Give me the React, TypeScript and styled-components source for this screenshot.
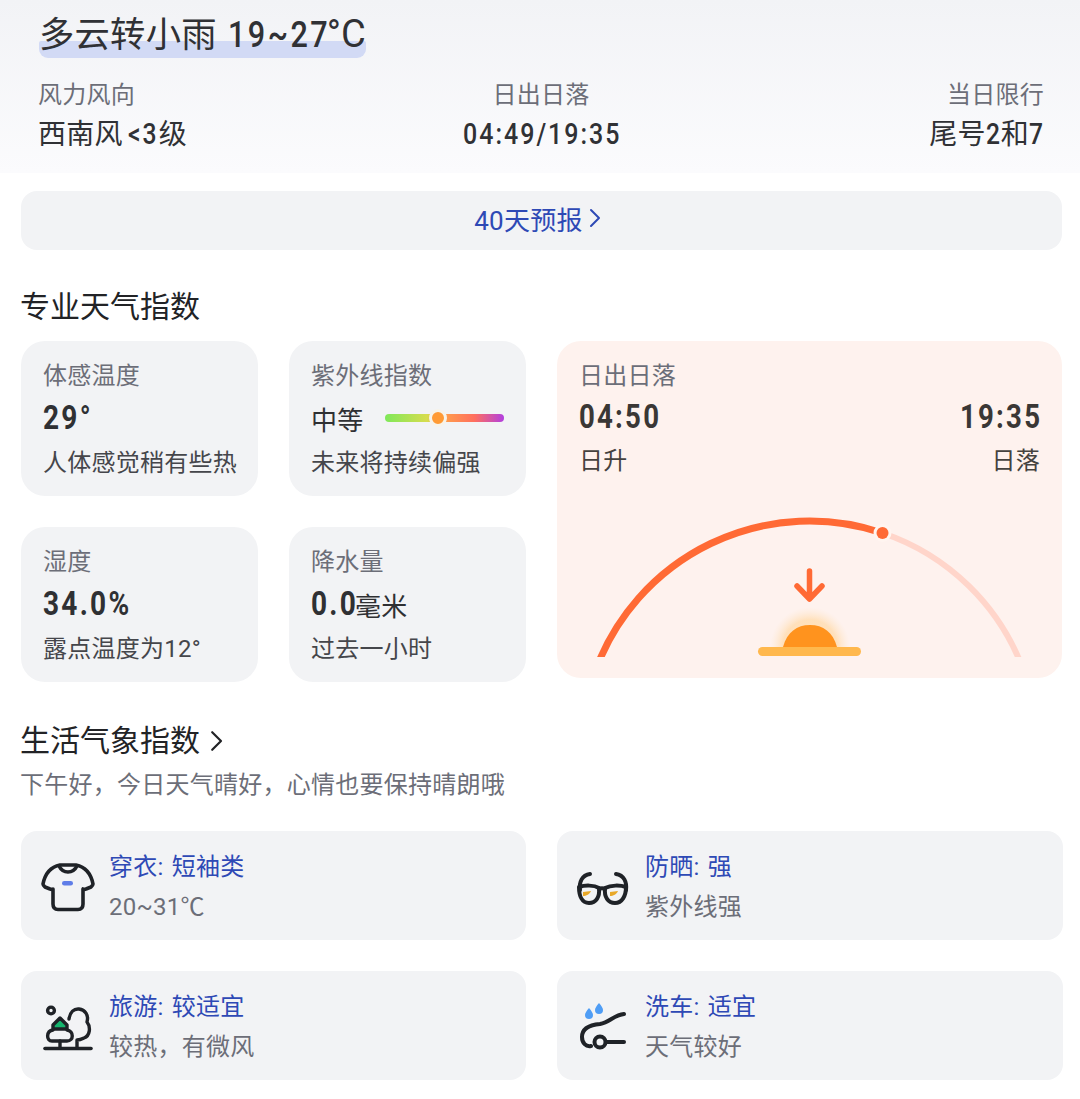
import React from 'react';
import styled, { createGlobalStyle } from 'styled-components';

const GlobalStyle = createGlobalStyle`
  html, body { margin: 0; padding: 0; background: #fff; }
  body {
    font-family: Roboto, "Noto Sans CJK SC", sans-serif;
    letter-spacing: 0.25px;
    color: #2f3033;
  }
`;

const Page = styled.div`
  width: 1080px;
  height: 1099px;
  overflow: hidden;
`;

const Header = styled.header`
  height: 173px;
  box-sizing: border-box;
  padding: 12px 36px 0 38px;
  background: linear-gradient(180deg, #f2f3f6 0%, #fbfbfd 100%);
`;

const Title = styled.h1`
  position: relative;
  display: inline-block;
  margin: 0 0 0 1px;
  font-size: 35.3px;
  line-height: 45px;
  font-weight: 400;
  color: #303135;
  white-space: nowrap;
  &::before {
    content: '';
    position: absolute;
    left: 0;
    right: 0;
    top: 29px;
    height: 17px;
    background: #d2daf5;
    border-radius: 2px 2px 9px 9px;
  }
`;

const TitleText = styled.span`
  position: relative;
`;

// the source digits are a narrow DIN cut: squeeze Roboto and hold the layout width
const Din = styled.span<{ $w: number; $size: number; $weight?: number }>`
  display: inline-block;
  width: ${(p) => p.$w}px;
  font-size: ${(p) => p.$size}px;
  font-weight: ${(p) => p.$weight || 500};
  letter-spacing: 0.08em;
  white-space: nowrap;
  transform: scaleX(0.85);
  transform-origin: left center;
`;

const TitleDigits = styled(Din)`
  margin-left: 2px;
`;

const WindDigits = styled(Din)`
  margin-left: 5px;
`;

const BigDin = styled(Din)`
  margin-top: -2px;
`;

const ThinC = styled.span`
  font-weight: 400;
  font-size: 38px;
  letter-spacing: 0;
`;

const Stats = styled.div`
  display: grid;
  grid-template-columns: 1fr 1fr 1fr;
  margin-top: 20px;
`;

const Stat = styled.div<{ $align: string }>`
  display: flex;
  flex-direction: column;
  align-items: ${(p) => p.$align};
`;

const StatLabel = styled.div`
  font-size: 24px;
  line-height: 34px;
  color: #6c6e78;
`;

const StatValue = styled.div`
  font-size: 28px;
  line-height: 45px;
  color: #303135;
  white-space: nowrap;
`;

const Body = styled.main`
  padding: 18px 18px 0 21px;
`;

const ForecastButton = styled.div`
  height: 59px;
  box-sizing: border-box;
  display: flex;
  align-items: center;
  justify-content: center;
  gap: 6px;
  padding: 0 8px 5px 0;
  border-radius: 16px;
  background: #f2f3f5;
  font-size: 26px;
  color: #2e49b5;
`;

const SectionTitle = styled.h2`
  display: flex;
  align-items: center;
  gap: 10px;
  margin: 36px 0 0 -1px;
  font-size: 30px;
  line-height: 42px;
  font-weight: 400;
  letter-spacing: 0;
  color: #222326;
`;

const LifeHeading = styled(SectionTitle)`
  margin-top: 38px;
`;

const Grid = styled.div`
  display: grid;
  grid-template-columns: 237px 237px 505px;
  grid-template-rows: 155px 155px;
  column-gap: 31px;
  row-gap: 31px;
  margin-top: 13px;
`;

const Card = styled.div`
  box-sizing: border-box;
  padding: 17px 0 0 22px;
  border-radius: 24px;
  background: #f2f3f5;
`;

const CardLabel = styled.div`
  font-size: 24px;
  line-height: 36px;
  color: #6c6e78;
`;

const CardValue = styled.div`
  display: flex;
  align-items: center;
  height: 48px;
  font-size: 26px;
  color: #2f3033;
`;

const CardNote = styled.div`
  margin-top: 3px;
  font-size: 24px;
  line-height: 36px;
  color: #45464b;
  white-space: nowrap;
`;

const UvTrack = styled.div`
  position: relative;
  width: 119px;
  height: 8px;
  margin-left: 21px;
  border-radius: 4px;
  background: linear-gradient(90deg, #7fe85a 0%, #d6dd4e 35%, #ff9a4d 52%, #ff6f5e 75%, #b23fe0 100%);
`;

const UvDot = styled.span`
  position: absolute;
  left: 44px;
  top: -5px;
  width: 12px;
  height: 12px;
  border: 3px solid #f7f3ea;
  border-radius: 50%;
  background: #ff9a35;
`;

const SunCard = styled(Card)`
  grid-column: 3;
  grid-row: 1 / 3;
  height: 337px;
  padding: 17px 22px 0 22px;
  background: #fef2ee;
`;

const SunRow = styled.div`
  display: flex;
  justify-content: space-between;
`;

const SunValue = styled.div`
  height: 46px;
  display: flex;
  align-items: center;
  color: #3a3735;
`;

const SunNote = styled.div`
  margin-top: 3px;
  font-size: 24px;
  line-height: 36px;
  color: #45423f;
`;

const SunSvg = styled.svg`
  display: block;
  width: 505px;
  height: 155px;
  margin: 32px 0 0 -22px;
`;

const Desc = styled.p`
  margin: 5px 0 0 -1px;
  font-size: 24px;
  line-height: 36px;
  color: #6c6e78;
`;

const LifeGrid = styled.div`
  display: grid;
  grid-template-columns: 505px 506px;
  grid-auto-rows: 109px;
  gap: 31px 31px;
  margin-top: 28px;
`;

const LifeCard = styled.div`
  display: flex;
  align-items: center;
  padding-left: 19px;
  border-radius: 16px;
  background: #f2f3f5;
`;

const IconBox = styled.div`
  flex: none;
  width: 69px;
  height: 56px;
  margin-top: 4px;
`;

const LifeIcon = styled.svg`
  display: block;
  width: 56px;
  height: 56px;
`;

const LifeText = styled.div`
  padding-top: 3px;
`;

const LifeTitle = styled.div`
  font-size: 24px;
  line-height: 40px;
  word-spacing: 2px;
  color: #2e49b5;
`;

const LifeNote = styled.div`
  font-size: 24px;
  line-height: 40px;
  color: #6c6e78;
`;

const Chevron = ({ size, color }: { size: number; color: string }) => (
  <svg width={size * 0.6} height={size} viewBox="0 0 12 20" fill="none">
    <path d="M2 2l8 8-8 8" stroke={color} strokeWidth="2" strokeLinecap="round" strokeLinejoin="round" />
  </svg>
);

const ShirtIcon = () => (
  <LifeIcon viewBox="0 0 56 56" fill="none" stroke="#1f2227" strokeWidth="3.6" strokeLinecap="round" strokeLinejoin="round">
    <path d="M20 5H36C46 7 51 14 53 24C53 25 52 26 51 27L46 29C45 29.500 44 29.500 43 29V44C43 47.500 41 49.500 38 49.500H18C15 49.500 13 47.500 13 44V29C12 29.500 11 29.500 10 29L5 27C4 26 3 25 3 24C5 14 10 7 20 5z" />
    <path d="M19 6C23 14 33 14 37 6" />
    <rect x="22" y="21" width="11" height="4.500" rx="2.250" fill="#5f7de8" stroke="none" />
  </LifeIcon>
);

const GlassesIcon = () => (
  <LifeIcon viewBox="0 0 56 56" fill="none" stroke="#1f2227" strokeWidth="4" strokeLinecap="round" strokeLinejoin="round">
    <path d="M4 30C3 22 6 15 14 14" />
    <path d="M50 30C51 22 48 15 40 14" />
    <path d="M3 27C9 25 18 25 23 28C24 37 20 43 13 43C6 43 3 36 3 27z" />
    <path d="M50 27C44 25 35 25 29 28C28 37 32 43 39 43C46 43 50 36 50 27z" />
    <path d="M23 29C25 28 27 28 29 29" />
    <path d="M7 32L15 31C14 34 10 36 7 36z" fill="#e8a828" stroke="none" />
    <path d="M34 32L42 31C41 34 37 36 34 36z" fill="#e8a828" stroke="none" />
  </LifeIcon>
);

const TreeIcon = () => (
  <LifeIcon viewBox="0 0 56 56" fill="none" stroke="#1f2227" strokeWidth="3.4" strokeLinecap="round" strokeLinejoin="round">
    <circle cx="11" cy="10.500" r="3.400" />
    <path d="M5 48.500H51" strokeWidth="3.600" />
    <path d="M29 19C30 12 34 8.500 39 9C45 9.500 49 15 47 22C51 27 50 36 44 38C42 39 39 40 37 40V48" />
    <path d="M20 41V48" />
    <path d="M13 30C6 31 6 41 12 41H27C34 41 34 31 27 30" />
    <path d="M20 18L27 25V29H13V25z" fill="#15b56e" />
  </LifeIcon>
);

const CarIcon = () => (
  <LifeIcon viewBox="0 0 56 56" fill="none" stroke="#1f2227" strokeWidth="4" strokeLinecap="round" strokeLinejoin="round">
    <path d="M48 14C38 15 34 22 24 24C12 25 6 29 6 37C6 43 10 47 15 46" />
    <circle cx="24" cy="42" r="5.500" />
    <path d="M30 42H48" />
    <path d="M13 8C15.500 11 17 13 17 15A4 4 0 0 1 9 15C9 13 10.500 11 13 8z" fill="#4f9df5" stroke="none" />
    <path d="M23 3C25.500 6 27 8 27 10A4 4 0 0 1 19 10C19 8 20.500 6 23 3z" fill="#4f9df5" stroke="none" />
  </LifeIcon>
);

const SunDiagram = () => (
  <SunSvg viewBox="0 0 505 155" fill="none">
    <defs>
      <radialGradient id="halo">
        <stop offset="68%" stopColor="#ffdcae" stopOpacity="0.8" />
        <stop offset="100%" stopColor="#ffe8d0" stopOpacity="0" />
      </radialGradient>
      <clipPath id="arcClip">
        <rect x="0" y="0" width="505" height="146" />
      </clipPath>
      <clipPath id="haloClip">
        <rect x="200" y="80" width="105" height="56" />
      </clipPath>
    </defs>
    <g clipPath="url(#arcClip)">
      <path d="M325.500 22A228 228 0 0 1 466.700 160" stroke="#ffd5ca" strokeWidth="6" />
      <path d="M38.300 160A228 228 0 0 1 325.500 22" stroke="#ff6a35" strokeWidth="7" />
    </g>
    <circle cx="325.500" cy="22" r="9" fill="#fff5f0" />
    <circle cx="325.500" cy="22" r="6" fill="#ff6a35" />
    <path d="M252.500 60V88M240 75L252.500 88L265 75" stroke="#ff6a35" strokeWidth="5.500" strokeLinecap="round" strokeLinejoin="round" />
    <circle cx="253" cy="136" r="40" fill="url(#halo)" clipPath="url(#haloClip)" />
    <path d="M226 136C230 121 240 114 253 114C266 114 276 121 280 136z" fill="#ff931e" />
    <rect x="201" y="136" width="103" height="9" rx="4.500" fill="#ffb84d" />
  </SunSvg>
);

const lifeItems = [
  { icon: <ShirtIcon />, title: '穿衣: 短袖类', note: '20~31℃' },
  { icon: <GlassesIcon />, title: '防晒: 强', note: '紫外线强' },
  { icon: <TreeIcon />, title: '旅游: 较适宜', note: '较热，有微风' },
  { icon: <CarIcon />, title: '洗车: 适宜', note: '天气较好' },
];

const App: React.FC = () => {
  return (
    <Page>
      <GlobalStyle />
      <Header>
        <Title>
          <TitleText>
            多云转小雨 <TitleDigits $w={99} $size={36}>19~27</TitleDigits>
            <ThinC>°C</ThinC>
          </TitleText>
        </Title>
        <Stats>
          <Stat $align="flex-start">
            <StatLabel>风力风向</StatLabel>
            <StatValue>
              西南风<WindDigits $w={31} $size={29}>&lt;3</WindDigits>级
            </StatValue>
          </Stat>
          <Stat $align="center">
            <StatLabel>日出日落</StatLabel>
            <StatValue>
              <Din $w={156} $size={29.4}>04:49/19:35</Din>
            </StatValue>
          </Stat>
          <Stat $align="flex-end">
            <StatLabel>当日限行</StatLabel>
            <StatValue>
              尾号<Din $w={15} $size={29}>2</Din>和<Din $w={15} $size={29}>7</Din>
            </StatValue>
          </Stat>
        </Stats>
      </Header>
      <Body>
        <ForecastButton>
          40天预报 <Chevron size={20} color="#2e49b5" />
        </ForecastButton>
        <SectionTitle>专业天气指数</SectionTitle>
        <Grid>
          <Card>
            <CardLabel>体感温度</CardLabel>
            <CardValue>
              <BigDin $w={48} $size={33} $weight={700}>29°</BigDin>
            </CardValue>
            <CardNote>人体感觉稍有些热</CardNote>
          </Card>
          <Card>
            <CardLabel>紫外线指数</CardLabel>
            <CardValue>
              中等
              <UvTrack>
                <UvDot />
              </UvTrack>
            </CardValue>
            <CardNote>未来将持续偏强</CardNote>
          </Card>
          <SunCard>
            <CardLabel>日出日落</CardLabel>
            <SunRow>
              <SunValue>
                <Din $w={80} $size={32.5} $weight={700}>04:50</Din>
              </SunValue>
              <SunValue>
                <Din $w={80} $size={32.5} $weight={700}>19:35</Din>
              </SunValue>
            </SunRow>
            <SunRow>
              <SunNote>日升</SunNote>
              <SunNote>日落</SunNote>
            </SunRow>
            <SunDiagram />
          </SunCard>
          <Card>
            <CardLabel>湿度</CardLabel>
            <CardValue>
              <BigDin $w={90} $size={33} $weight={700}>34.0%</BigDin>
            </CardValue>
            <CardNote>露点温度为12°</CardNote>
          </Card>
          <Card>
            <CardLabel>降水量</CardLabel>
            <CardValue>
              <BigDin $w={44} $size={33} $weight={700}>0.0</BigDin>毫米
            </CardValue>
            <CardNote>过去一小时</CardNote>
          </Card>
        </Grid>
        <LifeHeading>
          生活气象指数 <Chevron size={22} color="#222326" />
        </LifeHeading>
        <Desc>下午好，今日天气晴好，心情也要保持晴朗哦</Desc>
        <LifeGrid>
          {lifeItems.map((item) => (
            <LifeCard key={item.title}>
              <IconBox>{item.icon}</IconBox>
              <LifeText>
                <LifeTitle>{item.title}</LifeTitle>
                <LifeNote>{item.note}</LifeNote>
              </LifeText>
            </LifeCard>
          ))}
        </LifeGrid>
      </Body>
    </Page>
  );
};

export default App;
